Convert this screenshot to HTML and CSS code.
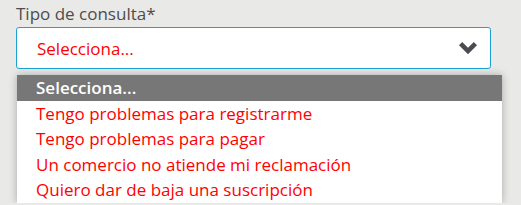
FILE: index.html
```html
<!DOCTYPE html>
<html lang="es">
<head>
  <meta charset="UTF-8" />
  <title>Tipo de consulta</title>
  <link rel="stylesheet" href="styles.css">
</head>
<body>

  <div class="field">
    <label class="field-label">Tipo de consulta*</label>
    <div class="select">
      <span class="select-value">Selecciona...</span>
      <svg class="select-arrow" viewBox="0 0 18 12" width="18" height="12">
        <polygon points="0,3.2 3.2,0 9,5.8 14.8,0 18,3.2 9,12.2" fill="#4b4b51"/>
      </svg>
    </div>
    <ul class="options">
      <li class="option active">Selecciona...</li>
      <li class="option">Tengo problemas para registrarme</li>
      <li class="option">Tengo problemas para pagar</li>
      <li class="option">Un comercio no atiende mi reclamación</li>
      <li class="option">Quiero dar de baja una suscripción</li>
    </ul>
  </div>

</body>
</html>
```

FILE: styles.css
```css
body {
  margin: 0;
  background: #e9e9e8;
  font-family: "Open Sans", "Liberation Sans", sans-serif;
  font-size: 17px;
  overflow: hidden;
}
.field {
  padding: 1px 0 0 16px;
}
.field-label {
  display: block;
  color: #4d4d4d;
  line-height: 25px;
  margin-bottom: 1px;
}
.select {
  width: 475px; height: 42px; box-sizing: border-box;
  border: 1px solid #1ca3d6; border-radius: 3px;
  background: #fff;
  display: flex; align-items: center; justify-content: space-between;
  padding: 0 13px 0 20px;
}
.select-value {
  color: #ff0000;
}
.options {
  list-style: none;
  margin: 6px 0 0 1px; padding: 0;
  width: 485px;
  background: #fff;
  box-shadow: 0 0 8px rgba(0,0,0,0.28);
}
.option {
  color: #ff0000;
  line-height: 25.5px;
  padding-left: 19px;
}
.option.active {
  background: #777777;
  color: #fff;
  font-weight: 600;
}
```
